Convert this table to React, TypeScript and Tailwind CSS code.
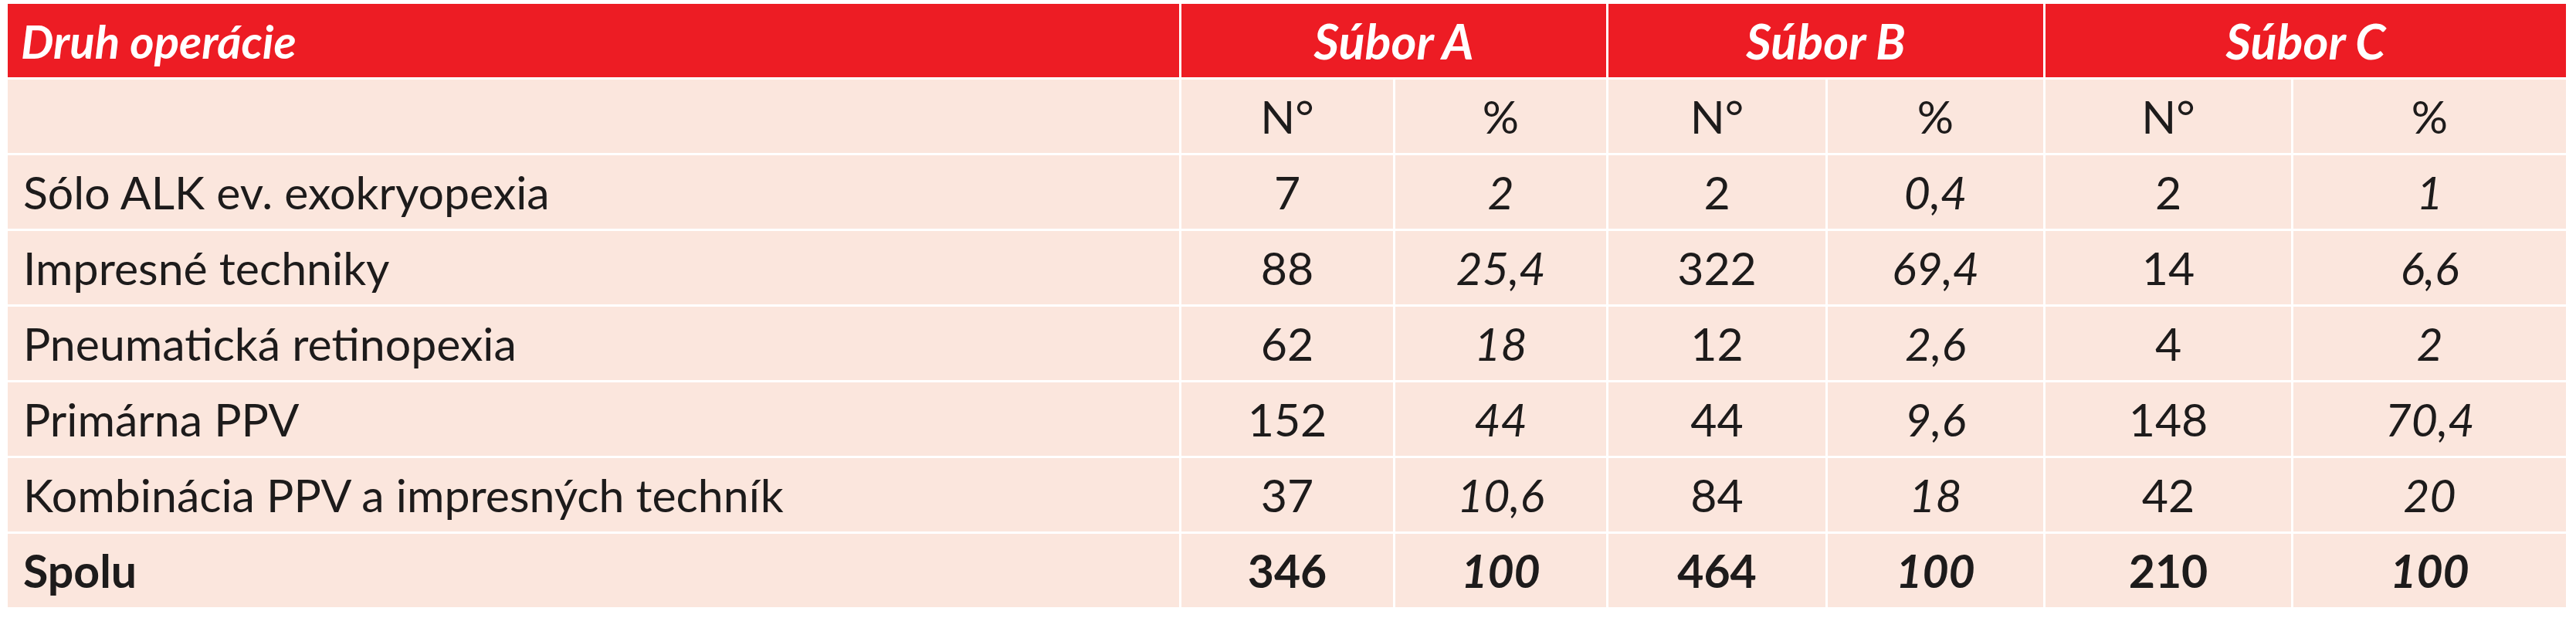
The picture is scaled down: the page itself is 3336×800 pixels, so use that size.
const rows = [
  { name: "Sólo ALK ev. exokryopexia", vals: ["7", "2", "2", "0,4", "2", "1"] },
  { name: "Impresné techniky", vals: ["88", "25,4", "322", "69,4", "14", "6,6"] },
  { name: "Pneumatická retinopexia", vals: ["62", "18", "12", "2,6", "4", "2"] },
  { name: "Primárna PPV", vals: ["152", "44", "44", "9,6", "148", "70,4"] },
  { name: "Kombinácia PPV a impresných techník", vals: ["37", "10,6", "84", "18", "42", "20"] },
];

const total = { name: "Spolu", vals: ["346", "100", "464", "100", "210", "100"] };

const cell = "bg-[#fbe6dd] h-[95px] flex items-center";

const App = () => {
  return (
    <div className="min-h-[800px] w-[3336px] bg-white pt-[5px] pl-[10px] font-['Lato',sans-serif] text-[#1d1b1b]">
      <div className="grid w-[3313px] grid-cols-[1517px_274px_273px_281px_279px_318px_353px] gap-[3px] text-[59px] leading-none">
        {/* header */}
        <div className="bg-[#ed1c24] h-[95px] flex items-center pl-[17px] text-white font-bold italic text-[60px]">
          Druh operácie
        </div>
        {["Súbor A", "Súbor B", "Súbor C"].map((s) => (
          <div
            key={s}
            className="col-span-2 bg-[#ed1c24] h-[95px] flex items-center justify-center text-white font-bold italic text-[63px]"
          >
            {s}
          </div>
        ))}

        {/* sub header */}
        <div className={cell}></div>
        {["N°", "%", "N°", "%", "N°", "%"].map((h, i) => (
          <div key={i} className={`${cell} justify-center`}>
            {h}
          </div>
        ))}

        {rows.map((r) => (
          <Row key={r.name} name={r.name} vals={r.vals} />
        ))}
        <Row name={total.name} vals={total.vals} bold />
      </div>
    </div>
  );
};

const Row = ({ name, vals, bold }: { name: string; vals: string[]; bold?: boolean }) => {
  return (
    <>
      <div className={`${cell} pl-[20px] ${bold ? "font-bold" : ""}`}>{name}</div>
      {vals.map((v, i) => (
        <div
          key={i}
          className={`${cell} justify-center ${i % 2 === 1 ? "italic" : ""} ${bold ? "font-bold" : ""}`}
        >
          {v}
        </div>
      ))}
    </>
  );
};

export default App;
